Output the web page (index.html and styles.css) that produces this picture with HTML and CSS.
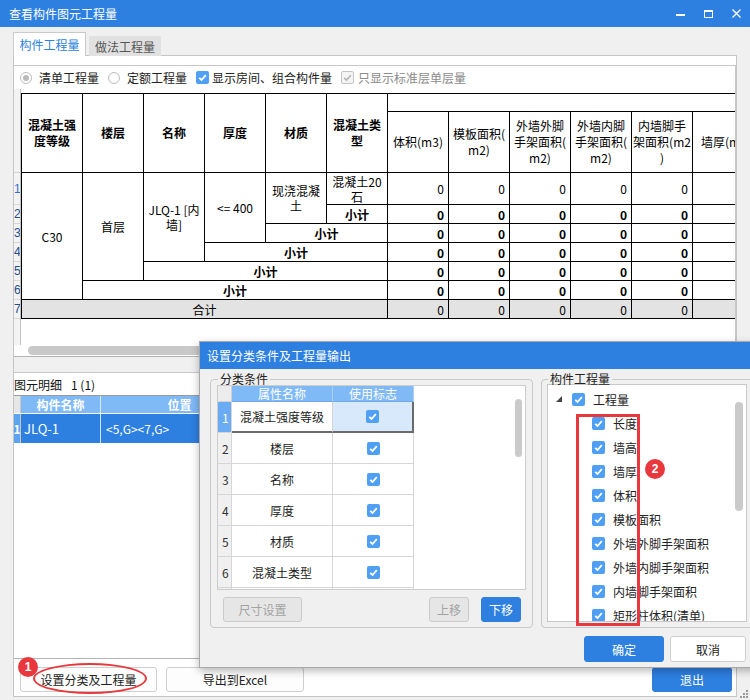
FILE: index.html
```html
<!DOCTYPE html>
<html lang="zh">
<head>
<meta charset="utf-8">
<title>查看构件图元工程量</title>
<link rel="stylesheet" href="styles.css">
</head>
<body>
<div class="window">
  <div class="titlebar">
    <span class="title">查看构件图元工程量</span>
    <div class="winctl">
      <span><svg width="9" height="9" viewBox="0 0 9 9"><rect x="0" y="5" width="9" height="2" fill="#fff"/></svg></span>
      <span><svg width="9" height="8" viewBox="0 0 9 8"><rect x="0.5" y="0.5" width="8" height="7" fill="none" stroke="#fff"/><rect x="0" y="0" width="9" height="2" fill="#fff"/></svg></span>
      <span><svg width="9" height="9" viewBox="0 0 9 9"><path d="M0.5 0.5L8.5 8.5M8.5 0.5L0.5 8.5" stroke="#fff" stroke-width="1.3"/></svg></span>
    </div>
  </div>
  <div class="tabs">
    <div class="tab active">构件工程量</div>
    <div class="tab">做法工程量</div>
  </div>
  <div class="tabpanel">
    <div class="upper">
      <div class="ubox">
        <div class="options">
          <span class="radio on"></span><span class="olabel">清单工程量</span>
          <span class="radio"></span><span class="olabel">定额工程量</span>
          <span class="cb"><svg viewBox="0 0 13 13"><path d="M3.2 6.8L5.5 9L9.8 4.2" fill="none" stroke="#fff" stroke-width="1.8"/></svg></span><span class="olabel">显示房间、组合构件量</span>
          <span class="cb dis"><svg viewBox="0 0 13 13"><path d="M3.2 6.8L5.5 9L9.8 4.2" fill="none" stroke="#b4b4b4" stroke-width="1.6"/></svg></span><span class="olabel grey">只显示标准层单层量</span>
        </div>
        <div class="gridarea">
          <div class="rowhdr">
            <div class="rh-top"></div>
            <div class="rh r32">1</div>
            <div class="rh">2</div>
            <div class="rh">3</div>
            <div class="rh">4</div>
            <div class="rh">5</div>
            <div class="rh">6</div>
            <div class="rh">7</div>
          </div>
          <div class="tablewrap">
            <table class="qt">
              <colgroup><col span="12" class="c"></colgroup>
              <thead>
                <tr class="h1">
                  <th rowspan="2">混凝土强<br>度等级</th>
                  <th rowspan="2">楼层</th>
                  <th rowspan="2">名称</th>
                  <th rowspan="2">厚度</th>
                  <th rowspan="2">材质</th>
                  <th rowspan="2">混凝土类<br>型</th>
                  <th colspan="6"></th>
                </tr>
                <tr class="h2">
                  <th class="n">体积(m3)</th>
                  <th class="n">模板面积(<br>m2)</th>
                  <th class="n">外墙外脚<br>手架面积(<br>m2)</th>
                  <th class="n">外墙内脚<br>手架面积(<br>m2)</th>
                  <th class="n">内墙脚手<br>架面积(m2<br>)</th>
                  <th class="n nw">墙厚(m</th>
                </tr>
              </thead>
              <tbody>
                <tr class="r1">
                  <td rowspan="6">C30</td>
                  <td rowspan="5">首层</td>
                  <td rowspan="4">JLQ-1 [内墙]</td>
                  <td rowspan="3" class="top">&lt;= 400</td>
                  <td rowspan="2" class="top">现浇混凝土</td>
                  <td class="top">混凝土20石</td>
                  <td class="v">0</td><td class="v">0</td><td class="v">0</td><td class="v">0</td><td class="v">0</td><td></td>
                </tr>
                <tr><td class="b">小计</td><td class="v b">0</td><td class="v b">0</td><td class="v b">0</td><td class="v b">0</td><td class="v b">0</td><td></td></tr>
                <tr><td colspan="2" class="b">小计</td><td class="v b">0</td><td class="v b">0</td><td class="v b">0</td><td class="v b">0</td><td class="v b">0</td><td></td></tr>
                <tr><td colspan="3" class="b">小计</td><td class="v b">0</td><td class="v b">0</td><td class="v b">0</td><td class="v b">0</td><td class="v b">0</td><td></td></tr>
                <tr><td colspan="4" class="b">小计</td><td class="v b">0</td><td class="v b">0</td><td class="v b">0</td><td class="v b">0</td><td class="v b">0</td><td></td></tr>
                <tr><td colspan="5" class="b">小计</td><td class="v b">0</td><td class="v b">0</td><td class="v b">0</td><td class="v b">0</td><td class="v b">0</td><td></td></tr>
                <tr class="tot"><td colspan="6">合计</td><td class="v">0</td><td class="v">0</td><td class="v">0</td><td class="v">0</td><td class="v">0</td><td></td></tr>
              </tbody>
            </table>
          </div>
        </div>
        <div class="hscroll"><div class="thumb"></div></div>
      </div>
    </div>
    <div class="lower">
      <div class="llabel"><span>图元明细</span><span class="cnt">1 (1)</span></div>
      <div class="dgrid">
        <div class="dh drh"></div><div class="dh">构件名称</div><div class="dh">位置</div>
        <div class="dr drh">1</div><div class="dr left">JLQ-1</div><div class="dr pos">&lt;5,G&gt;&lt;7,G&gt;</div>
      </div>
    </div>
    <div class="btnrow">
      <div class="btn w1">设置分类及工程量</div>
      <div class="btn w2">导出到Excel</div>
      <div class="btn primary exit">退出</div>
    </div>
  </div>
</div>

<div class="dialog">
  <div class="dtitle">设置分类条件及工程量输出</div>
  <div class="dbody">
    <fieldset class="fs left-fs">
      <legend>分类条件</legend>
      <div class="cgrid">
        <div class="cg">
          <div class="ch crh"></div><div class="ch">属性名称</div><div class="ch">使用标志</div>
          <div class="cr crh selh">1</div><div class="cr selname">混凝土强度等级</div><div class="cr selflag"><span class="cb"><svg viewBox="0 0 13 13"><path d="M3.2 6.8L5.5 9L9.8 4.2" fill="none" stroke="#fff" stroke-width="1.8"/></svg></span></div>
          <div class="cr crh">2</div><div class="cr">楼层</div><div class="cr"><span class="cb"><svg viewBox="0 0 13 13"><path d="M3.2 6.8L5.5 9L9.8 4.2" fill="none" stroke="#fff" stroke-width="1.8"/></svg></span></div>
          <div class="cr crh">3</div><div class="cr">名称</div><div class="cr"><span class="cb"><svg viewBox="0 0 13 13"><path d="M3.2 6.8L5.5 9L9.8 4.2" fill="none" stroke="#fff" stroke-width="1.8"/></svg></span></div>
          <div class="cr crh">4</div><div class="cr">厚度</div><div class="cr"><span class="cb"><svg viewBox="0 0 13 13"><path d="M3.2 6.8L5.5 9L9.8 4.2" fill="none" stroke="#fff" stroke-width="1.8"/></svg></span></div>
          <div class="cr crh">5</div><div class="cr">材质</div><div class="cr"><span class="cb"><svg viewBox="0 0 13 13"><path d="M3.2 6.8L5.5 9L9.8 4.2" fill="none" stroke="#fff" stroke-width="1.8"/></svg></span></div>
          <div class="cr crh">6</div><div class="cr">混凝土类型</div><div class="cr"><span class="cb"><svg viewBox="0 0 13 13"><path d="M3.2 6.8L5.5 9L9.8 4.2" fill="none" stroke="#fff" stroke-width="1.8"/></svg></span></div>
          <div class="cr crh"></div><div class="cr"></div><div class="cr"></div>
        </div>
        <div class="cfill"></div>
        <div class="vthumb small"></div>
      </div>
      <div class="fsbtns">
        <div class="btn dis wsize">尺寸设置</div>
        <div class="sp"></div>
        <div class="btn dis wmove">上移</div>
        <div class="btn primary wmove2">下移</div>
      </div>
    </fieldset>
    <fieldset class="fs right-fs">
      <legend>构件工程量</legend>
      <div class="tbox">
        <div class="tree">
          <div class="ti root"><svg class="tri" width="6" height="6" viewBox="0 0 6 6"><path d="M6 0V6H0Z" fill="#444"/></svg><span class="cb"><svg viewBox="0 0 13 13"><path d="M3.2 6.8L5.5 9L9.8 4.2" fill="none" stroke="#fff" stroke-width="1.8"/></svg></span><span>工程量</span></div>
          <div class="ti"><span class="cb"><svg viewBox="0 0 13 13"><path d="M3.2 6.8L5.5 9L9.8 4.2" fill="none" stroke="#fff" stroke-width="1.8"/></svg></span><span>长度</span></div>
          <div class="ti"><span class="cb"><svg viewBox="0 0 13 13"><path d="M3.2 6.8L5.5 9L9.8 4.2" fill="none" stroke="#fff" stroke-width="1.8"/></svg></span><span>墙高</span></div>
          <div class="ti"><span class="cb"><svg viewBox="0 0 13 13"><path d="M3.2 6.8L5.5 9L9.8 4.2" fill="none" stroke="#fff" stroke-width="1.8"/></svg></span><span>墙厚</span></div>
          <div class="ti"><span class="cb"><svg viewBox="0 0 13 13"><path d="M3.2 6.8L5.5 9L9.8 4.2" fill="none" stroke="#fff" stroke-width="1.8"/></svg></span><span>体积</span></div>
          <div class="ti"><span class="cb"><svg viewBox="0 0 13 13"><path d="M3.2 6.8L5.5 9L9.8 4.2" fill="none" stroke="#fff" stroke-width="1.8"/></svg></span><span>模板面积</span></div>
          <div class="ti"><span class="cb"><svg viewBox="0 0 13 13"><path d="M3.2 6.8L5.5 9L9.8 4.2" fill="none" stroke="#fff" stroke-width="1.8"/></svg></span><span>外墙外脚手架面积</span></div>
          <div class="ti"><span class="cb"><svg viewBox="0 0 13 13"><path d="M3.2 6.8L5.5 9L9.8 4.2" fill="none" stroke="#fff" stroke-width="1.8"/></svg></span><span>外墙内脚手架面积</span></div>
          <div class="ti"><span class="cb"><svg viewBox="0 0 13 13"><path d="M3.2 6.8L5.5 9L9.8 4.2" fill="none" stroke="#fff" stroke-width="1.8"/></svg></span><span>内墙脚手架面积</span></div>
          <div class="ti"><span class="cb"><svg viewBox="0 0 13 13"><path d="M3.2 6.8L5.5 9L9.8 4.2" fill="none" stroke="#fff" stroke-width="1.8"/></svg></span><span>矩形柱体积(清单)</span></div>
        </div>
        <div class="vthumb big"></div>
      </div>
    </fieldset>
  </div>
  <div class="dbtns">
    <div class="btn primary wok">确定</div>
    <div class="btn wcancel">取消</div>
  </div>
</div>

<div class="mark ellipse"></div>
<div class="badge b1">1</div>
<div class="mark redbox"></div>
<div class="badge b2">2</div>
<svg class="grip" width="9" height="9" viewBox="0 0 9 9"><g fill="#9a9a9a"><rect x="7" y="1" width="2" height="2"/><rect x="4" y="4" width="2" height="2"/><rect x="7" y="4" width="2" height="2"/><rect x="1" y="7" width="2" height="2"/><rect x="4" y="7" width="2" height="2"/><rect x="7" y="7" width="2" height="2"/></g></svg>
</body>
</html>
```
FILE: styles.css
```css
* { box-sizing: border-box; }
html, body { margin: 0; padding: 0; }
body {
  width: 750px; height: 700px; overflow: hidden; position: relative;
  background: #f0f0f0;
  font-family: "Noto Sans CJK SC", "Microsoft YaHei", sans-serif;
  font-size: 12px; color: #222;
}
.window { width: 750px; height: 700px; display: flex; flex-direction: column; background: #f0f0f0; }
.titlebar { height: 27px; flex: none; background: #2d7fe0; color: #fff; display: flex; align-items: center; padding-left: 9px; }
.titlebar .title { flex: 1; line-height: 17px; }
.winctl { display: flex; height: 27px; }
.winctl span { width: 28px; display: flex; align-items: center; justify-content: center; }

.tabs { display: flex; align-items: flex-end; gap: 3px; margin: 5px 0 -1px 13px; height: 24px; position: relative; z-index: 1; flex: none; }
.tab { width: 72px; height: 20px; background: #e1e1e1; color: #555; display: flex; align-items: center; justify-content: center; }
.tab.active { width: 73px; height: 24px; background: #fff; color: #2d7fe0; border: 1px solid #c9c9c9; border-bottom: none; }

.tabpanel { flex: 1; margin: 0 13px 3px 13px; border: 1px solid #c5c5c5; display: flex; flex-direction: column; }
.upper { background: #fff; padding-top: 9px; flex: none; }
.ubox { height: 292px; border-top: 1px solid #c8c8c8; border-right: 1px solid #c8c8c8; border-bottom: 1px solid #b4b4b4; display: flex; flex-direction: column; }

.options { height: 23px; flex: none; display: flex; align-items: center; padding-left: 6px; line-height: 17px; }
.radio { width: 12px; height: 12px; border: 1px solid #bdbdbd; border-radius: 50%; background: #fff; display: inline-flex; align-items: center; justify-content: center; }
.radio.on::after { content: ""; width: 6px; height: 6px; border-radius: 50%; background: #b9b9b9; }
.olabel { margin: 0 9px 0 7px; }
.cb + .olabel { margin-left: 3px; }
.olabel.grey { color: #8a8a8a; margin-left: 4px; }
.cb { width: 13px; height: 13px; border-radius: 2px; background: #4fa0f4; display: inline-flex; flex: none; }
.cb svg { width: 13px; height: 13px; }
.cb.dis { background: #f4f4f4; border: 1px solid #c4c4c4; }
.cb.dis svg { margin: -1px; }

.gridarea { height: 256px; display: flex; flex: none; }
.rowhdr { width: 7px; flex: none; background: #f3f3f3; border-right: 1px solid #c4c4c4; display: flex; flex-direction: column; overflow: hidden; }
.rh-top { height: 84px; flex: none; border-bottom: 1px solid #d0d0d0; }
.rh { height: 19px; flex: none; border-bottom: 1px solid #d6d6d6; font-family: "Liberation Sans", Arial, sans-serif; font-size: 12px; line-height: 14px; color: #1f4e8c; display: flex; align-items: center; }
.rh.r32 { height: 32px; color: #2f6fd0; }
.tablewrap { flex: 1; overflow: hidden; padding-top: 4px; }

.qt { border-collapse: collapse; table-layout: fixed; width: 732px; color: #000; font-size: 12px; line-height: 15px; }
.qt col.c { width: 61px; }
.qt th, .qt td { border: 1px solid #000; padding: 0 2px; text-align: center; vertical-align: middle; overflow: hidden; }
.qt th { font-weight: bold; line-height: 16px; }
.qt th.n { font-weight: normal; line-height: 16px; white-space: nowrap; padding: 0; }
.qt th.nw { text-align: left; padding-left: 8px; }
.qt tr.h1 { height: 18px; }
.qt tr.h2 { height: 61px; }
.qt tr.r1 { height: 32px; }
.qt tbody tr { height: 19px; }
.qt td.v { text-align: right; padding-right: 4px; }
.qt td.b { font-weight: bold; }
.qt tr.tot td { background: #e3e3e3; }

.hscroll { height: 11px; flex: none; padding: 1px 0 0 14px; }
.thumb { width: 500px; height: 9px; border-radius: 5px; background: #c9c9c9; }

.lower { margin-top: 15px; height: 287px; flex: none; background: #fff; border-top: 1px solid #c8c8c8; border-bottom: 1px solid #b4b4b4; border-right: 1px solid #c8c8c8; }
.llabel { height: 23px; display: flex; align-items: center; gap: 9px; line-height: 17px; color: #111; border-bottom: 1px solid #9a9a9a; }
.dgrid { display: grid; grid-template-columns: 7px 80px 158px; grid-template-rows: 17px 30px; }
.dh { background: #7fb9f6; color: #fff; font-weight: bold; display: flex; align-items: center; justify-content: center; border-right: 1px solid #d8e9fb; line-height: 16px; }
.dh.drh { background: #e6e6e6; border-right: 1px solid #c8c8c8; }
.dr { background: #2d7fe0; color: #fff; display: flex; align-items: center; border-right: 1px solid #cfe3fa; border-top: 1px solid #fff; font-size: 13px; line-height: 17px; }
.dr.drh { background: #5ea3ef; font-weight: bold; font-size: 12px; justify-content: center; border-right: 1px solid #c8c8c8; }
.dr.left { padding-left: 3px; }
.dr.pos { padding-left: 5px; font-size: 12px; }

.btnrow { flex: 1; display: flex; align-items: flex-start; padding: 8px 4px 0 6px; gap: 9px; background: #fff; }
.btn { height: 25px; border: 1px solid #cfcfcf; border-radius: 3px; background: #fdfdfd; display: flex; align-items: center; justify-content: center; line-height: 17px; color: #222; flex: none; }
.btn.primary { background: #2d7fe0; border-color: #2d7fe0; color: #fff; }
.btn.dis { background: #e6e6e6; border-color: #cacaca; color: #a3a3a3; }
.btn.w1 { width: 137px; }
.btn.w2 { width: 138px; }
.btn.exit { width: 80px; margin-left: auto; }

.dialog { position: absolute; left: 199px; top: 341px; width: 561px; height: 327px; background: #f0f0f0; border: 1px solid #a9a9a9; box-shadow: 0 3px 8px rgba(0,0,0,0.28); display: flex; flex-direction: column; z-index: 5; }
.dtitle { height: 27px; flex: none; background: #2d7fe0; color: #fff; display: flex; align-items: center; padding-left: 7px; line-height: 17px; }
.dbody { display: flex; gap: 8px; padding: 3px 5px 0 10px; }
.fs { margin: 0; border: 1px solid #c8c8c8; border-radius: 4px; padding: 0 6px 5px 6px; min-width: 0; }
.fs legend { padding: 0 2px; margin-left: 1px; line-height: 14px; font-size: 12px; color: #222; }
.left-fs { width: 323px; }
.right-fs { width: 213px; padding-left: 5px; }

.cgrid { height: 205px; margin-top: -1px; border: 1px solid #cdcdcd; background: #fff; display: flex; overflow: hidden; }
.cg { display: grid; grid-template-columns: 14px 101px 81px; grid-template-rows: 16px repeat(7, 31px); flex: none; }
.ch { background: #7fb9f6; color: #fff; display: flex; align-items: center; justify-content: center; border-right: 1px solid #a9cff8; border-bottom: 1px solid #6fa9e8; line-height: 14px; }
.ch.crh { background: #ececec; border-right: 1px solid #d2d2d2; border-bottom: 1px solid #d2d2d2; }
.cr { display: flex; align-items: center; justify-content: center; border-right: 1px solid #d6d6d6; border-bottom: 1px solid #d6d6d6; background: #fff; color: #222; line-height: 17px; }
.cr.crh { background: #f0f0f0; justify-content: flex-start; padding-left: 4px; color: #333; }
.cr.selh { background: #6aabf3; color: #fff; }
.cr.selname { border-bottom: 2px solid #6a6a6a; }
.cr.selflag { background: #d8e9fc; border-bottom: 2px solid #6a6a6a; border-right: 2px solid #6a6a6a; }
.cfill { flex: 1; }
.vthumb { width: 7px; border-radius: 4px; background: #cacaca; flex: none; }
.vthumb.small { height: 58px; margin: 13px 3px 0 0; }
.fsbtns { display: flex; margin-top: 7px; height: 25px; padding-left: 6px; }
.fsbtns .sp { flex: 1; }
.btn.wsize { width: 79px; }
.btn.wmove { width: 40px; margin-right: 12px; }
.btn.wmove2 { width: 40px; margin-right: 5px; }

.tbox { height: 238px; margin-top: -2px; border: 1px solid #c8c8c8; background: #fff; display: flex; overflow: hidden; }
.tree { flex: 1; padding-top: 2px; }
.ti { height: 24px; display: flex; align-items: center; padding-left: 44px; gap: 8px; white-space: nowrap; line-height: 17px; }
.ti.root { padding-left: 8px; gap: 0; }
.ti.root .tri { margin-right: 10px; }
.ti.root .cb { margin-right: 8px; }
.vthumb.big { height: 109px; margin: 17px 3px 0 0; width: 8px; }

.dbtns { display: flex; justify-content: flex-end; gap: 6px; padding-right: 13px; margin-top: 8px; }
.btn.wok { width: 80px; height: 26px; }
.btn.wcancel { width: 76px; height: 26px; background: #fff; }

.mark { position: absolute; z-index: 10; border: 3px solid #e8383d; pointer-events: none; }
.ellipse { left: 33px; top: 663px; width: 114px; height: 31px; border-width: 2.5px; border-radius: 50%; }
.redbox { left: 576px; top: 414px; width: 64px; height: 212px; }
.badge { position: absolute; z-index: 11; width: 20px; height: 20px; border-radius: 50%; background: #e8383d; color: #fff; font-family: "Liberation Sans", Arial, sans-serif; font-weight: bold; font-size: 12px; display: flex; align-items: center; justify-content: center; }
.b1 { left: 18px; top: 657px; }
.b2 { left: 645px; top: 459px; }
.grip { position: absolute; right: 2px; bottom: 2px; }
```
